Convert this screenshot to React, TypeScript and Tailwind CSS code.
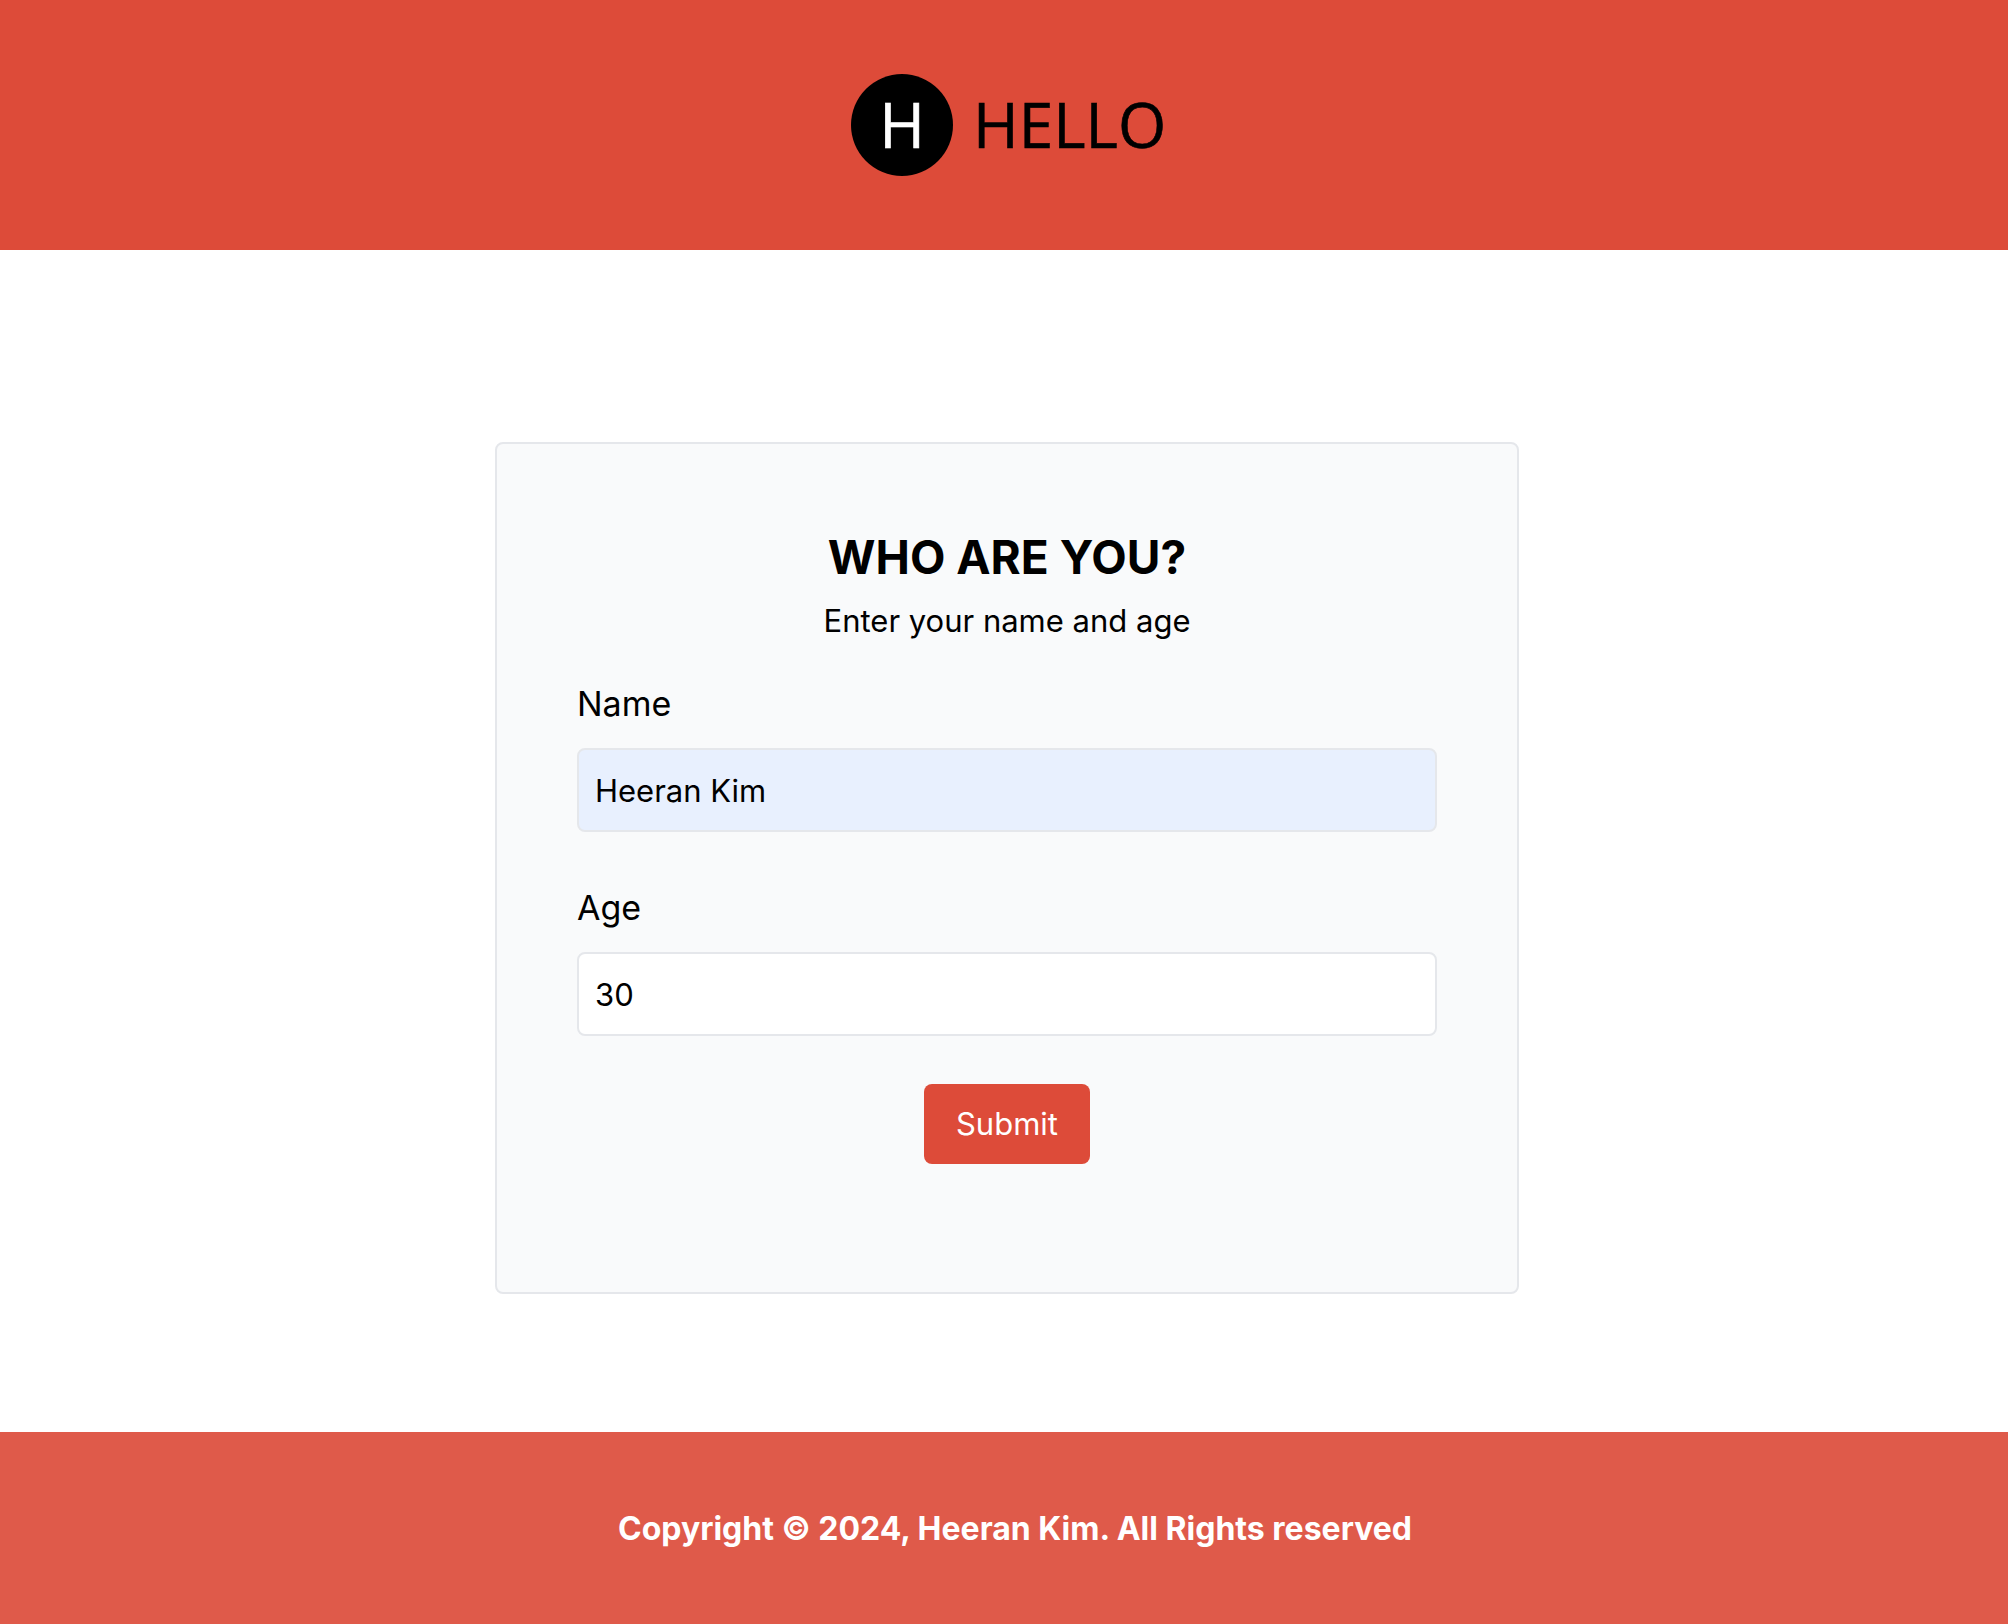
import { useState } from "react";

function Logo() {
  return (
    <svg width="320" height="102" viewBox="0 0 320 102" role="img" aria-label="Hello" className="font-['Open_Sans',sans-serif] text-[62px]">
      <circle cx="51" cy="51" r="51" fill="#000" />
      <text x="51" y="74" textAnchor="middle" fill="#fff" stroke="#fff" strokeWidth="0.6">H</text>
      <text x="122" y="74" fill="#000" stroke="#000" strokeWidth="0.6">HELLO</text>
    </svg>
  );
}

export default function App() {
  const [name, setName] = useState("Heeran Kim");
  const [age, setAge] = useState("30");
  return (
    <div className="flex min-h-screen flex-col bg-white font-['Inter',sans-serif] text-black">
      <header className="flex justify-center bg-[#dd4b39] py-[74px] pl-3.5">
        <Logo />
      </header>
      <main className="flex grow justify-center pt-48 pb-[138px] pl-1.5">
        <form
          onSubmit={(e) => e.preventDefault()}
          className="flex w-full max-w-[1024px] flex-col rounded-lg border-2 border-gray-200 bg-gray-50 px-20 pt-20 pb-[120px]"
        >
          <h1 className="text-center text-[46px] leading-[66px] font-bold">WHO ARE YOU?</h1>
          <p className="text-center text-[31px] leading-[62px]">Enter your name and age</p>
          <label htmlFor="name" className="mt-6 mb-4 text-[34px] leading-[56px]">Name</label>
          <input
            id="name"
            value={name}
            onChange={(e) => setName(e.target.value)}
            className="h-[84px] w-full rounded-lg border-2 border-gray-200 bg-[#e8f0fe] px-4 text-[31px]"
          />
          <label htmlFor="age" className="mt-12 mb-4 text-[34px] leading-[56px]">Age</label>
          <input
            id="age"
            value={age}
            onChange={(e) => setAge(e.target.value)}
            className="h-[84px] w-full rounded-lg border-2 border-gray-200 bg-white px-4 text-[31px]"
          />
          <button type="submit" className="mt-12 self-center rounded-lg bg-[#dd4b39] px-8 py-4 text-[31px] leading-[48px] text-white">
            Submit
          </button>
        </form>
      </main>
      <footer className="bg-[#df5a4a] pt-[73px] pb-[71px] pl-[22px] text-center text-[32px] leading-[48px] font-bold text-white">
        Copyright © 2024, Heeran Kim. All Rights reserved
      </footer>
    </div>
  );
}
